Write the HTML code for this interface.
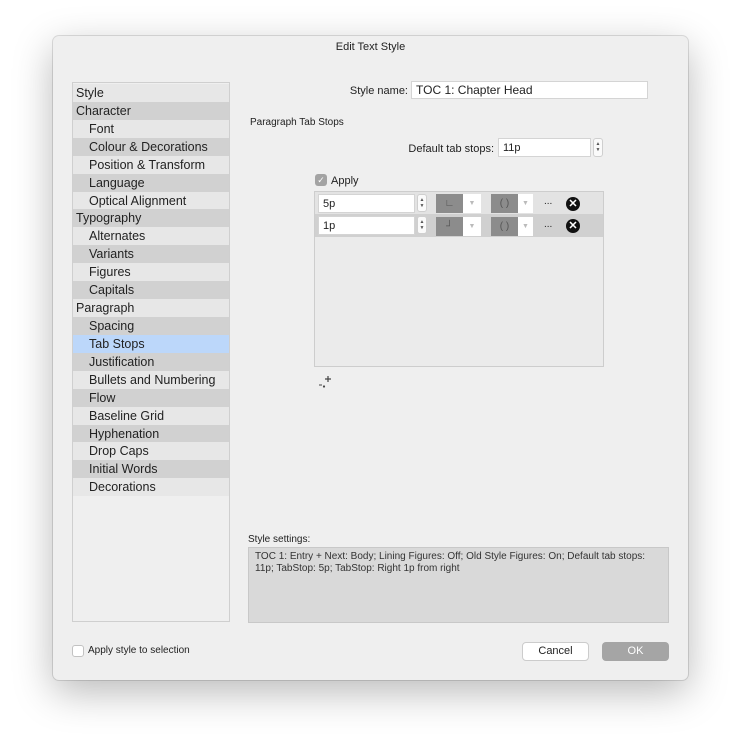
<!DOCTYPE html>
<html><head><style>
*{box-sizing:border-box;margin:0;padding:0}
body{width:741px;height:750px;background:#fff;font-family:"Liberation Sans",sans-serif;position:relative;overflow:hidden;color:#222}
.win{position:absolute;left:53px;top:36px;width:635px;height:644px;background:#efefef;border-radius:6px;box-shadow:0 12px 40px rgba(0,0,0,.28),0 0 0 1px rgba(0,0,0,.12)}
.a{position:absolute;white-space:nowrap}
.list{position:absolute;left:72px;top:82px;width:158px;height:540px;border:1px solid #cfcfcf;background:#efefef;padding-top:1px}
.r{height:17.93px;line-height:18.5px;font-size:12.5px;padding-left:3px;color:#222}
.r.i{padding-left:16px}
.l{background:#e7e7e7}.d{background:#d1d1d1}.s{background:#bcd7fa}
.inp{position:absolute;background:#fff;border:1px solid #d4d4d4;font-size:11px;padding-left:4px}
.step{position:absolute;width:10px;border:1px solid #cfcfcf;border-radius:3px;background:#fafafa;font-size:5px;color:#555;text-align:center;line-height:6px;padding-top:2px}
.lbl{font-size:11px}
.gb{position:absolute;background:#8c8c8c;color:#555;font-size:10px;text-align:center}
.wd{position:absolute;background:#fff;color:#bbb;font-size:7px;text-align:center}
.x{position:absolute;width:14px;height:14px;border-radius:50%;background:#111;color:#fff;font-size:11px;font-weight:bold;text-align:center;line-height:14px}
</style></head><body>
<div class="win"></div>
<div class="a" style="left:0;width:741px;text-align:center;top:41px;font-size:11px">Edit Text Style</div>
<div class="list">
<div class="r l">Style</div><div class="r d">Character</div><div class="r i l">Font</div><div class="r i d">Colour &amp; Decorations</div><div class="r i l">Position &amp; Transform</div><div class="r i d">Language</div><div class="r i l">Optical Alignment</div><div class="r d">Typography</div><div class="r i l">Alternates</div><div class="r i d">Variants</div><div class="r i l">Figures</div><div class="r i d">Capitals</div><div class="r l">Paragraph</div><div class="r i d">Spacing</div><div class="r i s">Tab Stops</div><div class="r i d">Justification</div><div class="r i l">Bullets and Numbering</div><div class="r i d">Flow</div><div class="r i l">Baseline Grid</div><div class="r i d">Hyphenation</div><div class="r i l">Drop Caps</div><div class="r i d">Initial Words</div><div class="r i l">Decorations</div>
</div>
<div class="a lbl" style="right:333px;top:85px">Style name:</div>
<div class="inp" style="left:411px;top:81px;width:237px;height:18px;line-height:17px;font-size:12px">TOC 1: Chapter Head</div>
<div class="a lbl" style="left:250px;top:117px;font-size:10px">Paragraph Tab Stops</div>
<div class="a lbl" style="right:247px;top:143px">Default tab stops:</div>
<div class="inp" style="left:498px;top:138px;width:93px;height:19px;line-height:18px">11p</div>
<div class="step" style="left:593px;top:138px;height:19px">▲<br>▼</div>
<div class="a" style="left:315px;top:174px;width:12px;height:12px;background:#a3a3a3;border-radius:3px;color:#fff;font-size:9px;text-align:center;line-height:12px">✓</div>
<div class="a lbl" style="left:331px;top:175px">Apply</div>
<div class="a" style="left:314px;top:191px;width:290px;height:176px;border:1px solid #cdcdcd;background:#ebebeb"></div>
<div class="a" style="left:315px;top:192px;width:288px;height:22px;background:#e3e3e3"></div>
<div class="a" style="left:315px;top:214px;width:288px;height:23px;background:#d0d0d0"></div>
<div class="inp" style="left:318px;top:194px;width:97px;height:19px;line-height:18px">5p</div>
<div class="step" style="left:417px;top:194px;height:18px">▲<br>▼</div>
<div class="gb" style="left:436px;top:194px;width:27px;height:19px;line-height:19px">∟</div>
<div class="wd" style="left:463px;top:194px;width:18px;height:19px;line-height:19px">▼</div>
<div class="gb" style="left:491px;top:194px;width:27px;height:19px;line-height:19px">( )</div>
<div class="wd" style="left:518px;top:194px;width:15px;height:19px;line-height:19px">▼</div>
<div class="a" style="left:544px;top:196px;font-size:10px">...</div>
<div class="x" style="left:566px;top:197px">✕</div>
<div class="inp" style="left:318px;top:216px;width:97px;height:19px;line-height:18px">1p</div>
<div class="step" style="left:417px;top:216px;height:18px">▲<br>▼</div>
<div class="gb" style="left:436px;top:217px;width:27px;height:19px;line-height:19px">┘</div>
<div class="wd" style="left:463px;top:217px;width:18px;height:19px;line-height:19px">▼</div>
<div class="gb" style="left:491px;top:217px;width:27px;height:19px;line-height:19px">( )</div>
<div class="wd" style="left:518px;top:217px;width:15px;height:19px;line-height:19px">▼</div>
<div class="a" style="left:544px;top:219px;font-size:10px">...</div>
<div class="x" style="left:566px;top:219px">✕</div>
<svg class="a" style="left:316px;top:373px" width="18" height="18"><path d="M9 6h6M12 3v6" stroke="#444" stroke-width="1.2"/><path d="M3 12h3" stroke="#444" stroke-width="1"/><circle cx="8" cy="13.5" r="1.1" fill="#444"/></svg>
<div class="a lbl" style="left:248px;top:534px;font-size:10px">Style settings:</div>
<div class="a" style="left:248px;top:547px;width:421px;height:76px;background:#d9d9d9;border:1px solid #c8c8c8;font-size:10px;line-height:12px;padding:3px 6px;white-space:normal;color:#333">TOC 1: Entry + Next: Body; Lining Figures: Off; Old Style Figures: On; Default tab stops: 11p; TabStop: 5p; TabStop: Right 1p from right</div>
<div class="a" style="left:72px;top:645px;width:12px;height:12px;border:1px solid #c2c2c2;border-radius:3px;background:#fff"></div>
<div class="a lbl" style="left:88px;top:645px;font-size:10px">Apply style to selection</div>
<div class="a" style="left:522px;top:642px;width:67px;height:19px;background:#fff;border:1px solid #ccc;border-radius:4px;font-size:11px;text-align:center;line-height:17px">Cancel</div>
<div class="a" style="left:602px;top:642px;width:67px;height:19px;background:#a5a5a5;border-radius:4px;font-size:11px;text-align:center;line-height:19px;color:#fff">OK</div>
</body></html>
